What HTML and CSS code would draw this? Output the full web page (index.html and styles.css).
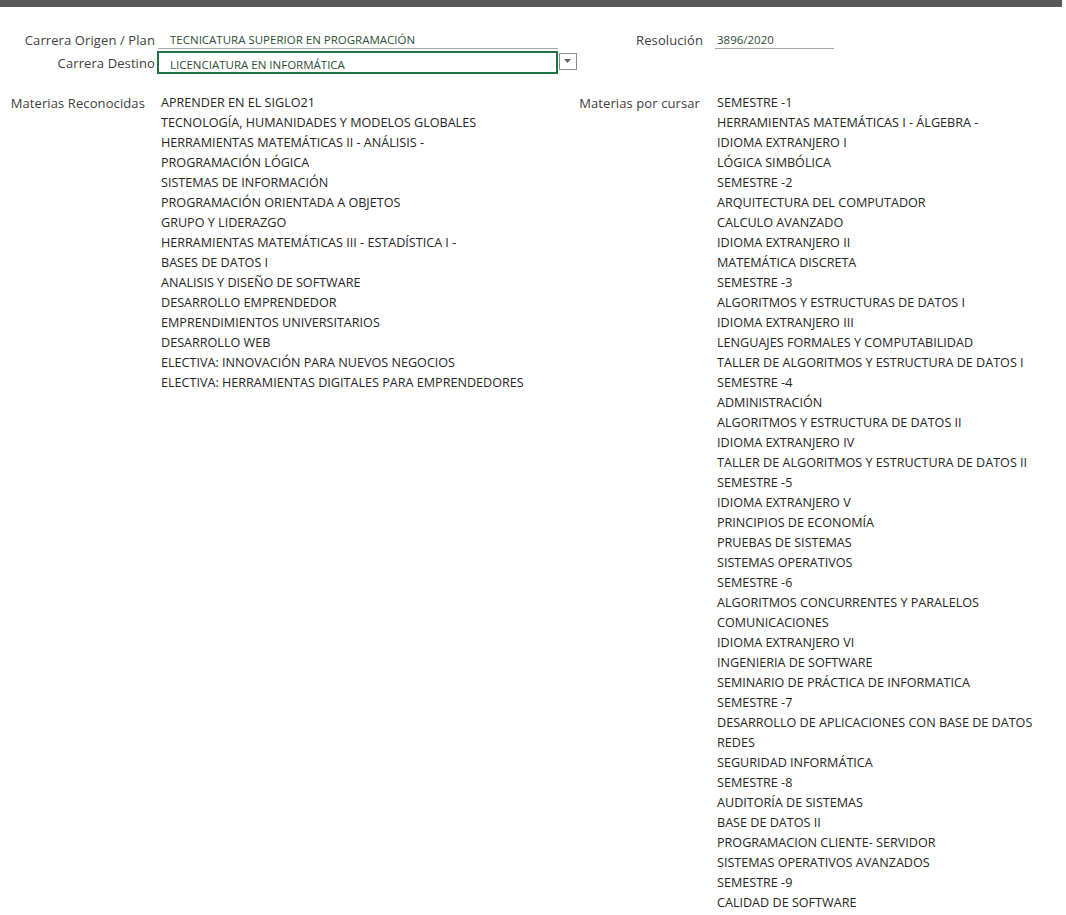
FILE: index.html
```html
<!DOCTYPE html>
<html lang="es">
<head>
<meta charset="utf-8">
<title>Equivalencias</title>
<link rel="stylesheet" href="styles.css">
</head>
<body>
<div class="topbar"></div>
<div class="form">
  <div class="row row1">
    <div class="lbl lbl-a">Carrera Origen / Plan</div>
    <div class="field field-origen">TECNICATURA SUPERIOR EN PROGRAMACIÓN</div>
    <div class="lbl lbl-b">Resolución</div>
    <div class="field field-res">3896/2020</div>
  </div>
  <div class="row row2">
    <div class="lbl lbl-a">Carrera Destino</div>
    <div class="select">LICENCIATURA EN INFORMÁTICA</div>
    <div class="dd"><svg width="8" height="5" viewBox="0 0 8 5"><path d="M0 0H7L3.5 4Z" fill="#666"/></svg></div>
  </div>
</div>
<div class="lists">
  <div class="lbl lbl-l">Materias Reconocidas</div>
  <ul class="list list-l">
    <li>APRENDER EN EL SIGLO21</li>
    <li>TECNOLOGÍA, HUMANIDADES Y MODELOS GLOBALES</li>
    <li>HERRAMIENTAS MATEMÁTICAS II - ANÁLISIS -</li>
    <li>PROGRAMACIÓN LÓGICA</li>
    <li>SISTEMAS DE INFORMACIÓN</li>
    <li>PROGRAMACIÓN ORIENTADA A OBJETOS</li>
    <li>GRUPO Y LIDERAZGO</li>
    <li>HERRAMIENTAS MATEMÁTICAS III - ESTADÍSTICA I -</li>
    <li>BASES DE DATOS I</li>
    <li>ANALISIS Y DISEÑO DE SOFTWARE</li>
    <li>DESARROLLO EMPRENDEDOR</li>
    <li>EMPRENDIMIENTOS UNIVERSITARIOS</li>
    <li>DESARROLLO WEB</li>
    <li>ELECTIVA: INNOVACIÓN PARA NUEVOS NEGOCIOS</li>
    <li>ELECTIVA: HERRAMIENTAS DIGITALES PARA EMPRENDEDORES</li>
  </ul>
  <div class="lbl lbl-r">Materias por cursar</div>
  <ul class="list list-r">
    <li>SEMESTRE -1</li>
    <li>HERRAMIENTAS MATEMÁTICAS I - ÁLGEBRA -</li>
    <li>IDIOMA EXTRANJERO I</li>
    <li>LÓGICA SIMBÓLICA</li>
    <li>SEMESTRE -2</li>
    <li>ARQUITECTURA DEL COMPUTADOR</li>
    <li>CALCULO AVANZADO</li>
    <li>IDIOMA EXTRANJERO II</li>
    <li>MATEMÁTICA DISCRETA</li>
    <li>SEMESTRE -3</li>
    <li>ALGORITMOS Y ESTRUCTURAS DE DATOS I</li>
    <li>IDIOMA EXTRANJERO III</li>
    <li>LENGUAJES FORMALES Y COMPUTABILIDAD</li>
    <li>TALLER DE ALGORITMOS Y ESTRUCTURA DE DATOS I</li>
    <li>SEMESTRE -4</li>
    <li>ADMINISTRACIÓN</li>
    <li>ALGORITMOS Y ESTRUCTURA DE DATOS II</li>
    <li>IDIOMA EXTRANJERO IV</li>
    <li>TALLER DE ALGORITMOS Y ESTRUCTURA DE DATOS II</li>
    <li>SEMESTRE -5</li>
    <li>IDIOMA EXTRANJERO V</li>
    <li>PRINCIPIOS DE ECONOMÍA</li>
    <li>PRUEBAS DE SISTEMAS</li>
    <li>SISTEMAS OPERATIVOS</li>
    <li>SEMESTRE -6</li>
    <li>ALGORITMOS CONCURRENTES Y PARALELOS</li>
    <li>COMUNICACIONES</li>
    <li>IDIOMA EXTRANJERO VI</li>
    <li>INGENIERIA DE SOFTWARE</li>
    <li>SEMINARIO DE PRÁCTICA DE INFORMATICA</li>
    <li>SEMESTRE -7</li>
    <li>DESARROLLO DE APLICACIONES CON BASE DE DATOS</li>
    <li>REDES</li>
    <li>SEGURIDAD INFORMÁTICA</li>
    <li>SEMESTRE -8</li>
    <li>AUDITORÍA DE SISTEMAS</li>
    <li>BASE DE DATOS II</li>
    <li>PROGRAMACION CLIENTE- SERVIDOR</li>
    <li>SISTEMAS OPERATIVOS AVANZADOS</li>
    <li>SEMESTRE -9</li>
    <li>CALIDAD DE SOFTWARE</li>
  </ul>
</div>
</body>
</html>
```

FILE: styles.css
```css
html, body {
  margin: 0;
  padding: 0;
  background: #fff;
}
body {
  font-family: "Open Sans", "Noto Sans", sans-serif;
  font-size: 12.6px;
  color: #262626;
}
.topbar {
  width: 1062px;
  height: 7px;
  background: #595959;
}
.form {
  padding-top: 25px;
}
.row {
  display: flex;
  align-items: flex-end;
}
.lbl {
  color: #404040;
  text-align: right;
  white-space: nowrap;
  font-size: 13px;
  letter-spacing: 0.1px;
}
.lbl-a {
  width: 155px;
  line-height: 18px;
}
.row1 {
  height: 17px;
}
.field {
  font-size: 11.5px;
  color: #2d4f3a;
  border-bottom: 1px solid #a6a6a6;
  line-height: 16px;
  white-space: nowrap;
}
.field-origen {
  margin-left: 3px;
  width: 388px;
  padding-left: 12px;
}
.lbl-b {
  width: 145px;
  line-height: 18px;
}
.field-res {
  margin-left: 12px;
  width: 117px;
  padding-left: 2px;
}
.row2 {
  margin-top: 2px;
  align-items: flex-start;
}
.row2 .lbl-a {
  line-height: 22px;
  margin-top: 1px;
}
.select {
  margin-left: 2px;
  width: 386px;
  height: 19px;
  border: 2px solid #217346;
  padding-left: 11px;
  font-size: 11.5px;
  color: #2d4f3a;
  line-height: 24px;
  white-space: nowrap;
}
.dd {
  margin-left: 1px;
  margin-top: 2px;
  width: 16px;
  height: 15px;
  border: 1px solid #8c8c8c;
  display: flex;
  align-items: center;
  justify-content: center;
}
.lists {
  display: grid;
  grid-template-columns: 145px 432px 123px 1fr;
  margin-top: 19px;
  line-height: 20px;
}
.list {
  list-style: none;
  margin: 0;
  padding: 0;
  white-space: nowrap;
}
.list-l {
  padding-left: 16px;
}
.list-r {
  padding-left: 17px;
}
```
